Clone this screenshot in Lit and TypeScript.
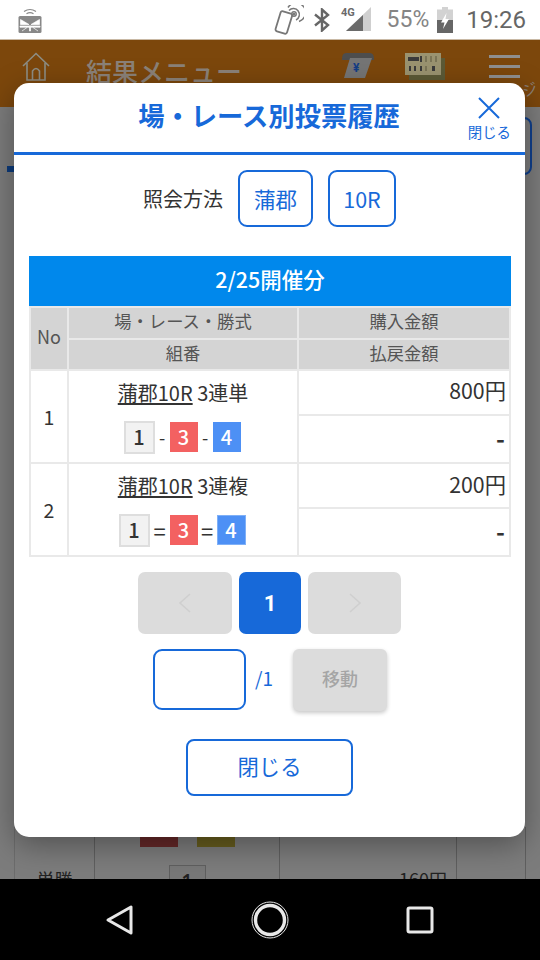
import { LitElement, html, css } from "lit";
import { customElement } from "lit/decorators.js";

@customElement("app-root")
export class AppRoot extends LitElement {
  static styles = css`
    :host { display: block; width: 540px; height: 960px; overflow: hidden; font-family: "Noto Sans CJK JP", "Noto Sans", sans-serif; --blue: #1769d9; }
    * { box-sizing: border-box; }
    .screen { position: relative; width: 540px; height: 960px; display: flex; flex-direction: column; background: #7c7c7c; overflow: hidden; }
    svg { display: block; flex: none; }

    .status { position: relative; z-index: 3; height: 40px; flex: none; background: #fff; display: flex; align-items: center; padding: 0 14px 0 18px; border-bottom: 1px solid #c9b9a5; }
    .status .sp { flex: 1; }
    .pct { font: 400 23px Roboto, sans-serif; color: #858585; margin-left: 15px; }
    .clock { font: 400 24px Roboto, sans-serif; color: #666; margin-left: 13px; }
    .status .i2 { margin-left: 10px; }
    .status .i3 { margin-left: 10px; }
    .status .i4 { margin-left: 8px; }

    .appbar { height: 67px; flex: none; background: #7c470c; display: flex; align-items: flex-start; padding: 12px 0 0 21px; }
    .apptitle { font-size: 26px; line-height: 36px; font-weight: 500; color: #8b8279; margin-left: 35px; width: 255px; white-space: nowrap; padding-top: 1px; }
    .yen { margin-right: 30px; }
    .board { margin-right: 44px; margin-top: 1px; }
    .burger { display: flex; flex-direction: column; gap: 7px; width: 31px; padding-top: 3px; }
    .burger i { display: block; height: 3px; background: #8f8f8f; }
    .ji { position: absolute; left: 522px; top: 78px; font-size: 15px; color: #8b8279; transform: rotate(-20deg); z-index: 1; }

    .page { flex: 1; display: flex; flex-direction: column; padding-top: 10px; }
    .blueout { align-self: flex-end; width: 30px; height: 58px; margin-right: 8px; border: 2px solid #0f3f8c; border-radius: 8px; }
    .bluebar { width: 7px; height: 6px; background: #0c3a7a; margin: -9px 0 0 7px; }
    .bgtable { margin-top: auto; display: grid; grid-template-columns: 15px 80px 185px 177px 69px 14px; height: 52px; }
    .bgc { border-right: 1px solid #5f5f5f; display: flex; flex-direction: column; align-items: center; overflow: hidden; }
    .bgc.plain { border-right: 1px solid #6c6c6c; }
    .swatches { display: flex; gap: 19px; width: 100%; padding-left: 45px; height: 20px; flex: none; }
    .swatches b { display: block; width: 38px; height: 20px; }
    .sw1 { background: #652828; }
    .sw2 { background: #675d1e; }
    .bgnum { width: 37px; height: 30px; flex: none; margin-top: 18px; border: 1px solid #5f5f5f; background: #787878; text-align: center; font: 600 19px/30px "Noto Sans", sans-serif; color: #222; }
    .bgname { font-size: 18px; line-height: 18px; margin-top: 43px; color: #222; }
    .bgamt { font-size: 18px; line-height: 18px; margin-top: 43px; color: #222; align-self: flex-end; padding-right: 9px; }

    .nav { position: relative; z-index: 3; height: 81px; flex: none; background: #000; display: flex; align-items: center; padding-left: 105px; }
    .nav .n2 { margin-left: 116px; }
    .nav .n3 { margin-left: 117px; }

    .modal { position: absolute; z-index: 2; left: 14px; top: 83px; width: 511px; height: 754px; background: #fff; border-radius: 15px; box-shadow: 0 8px 30px rgba(0,0,0,.35); display: flex; flex-direction: column; }
    .head { height: 72px; flex: none; border-bottom: 3px solid var(--blue); display: flex; align-items: flex-start; justify-content: center; position: relative; }
    .title { font-size: 26.3px; line-height: 34px; font-weight: 700; color: var(--blue); margin: 15px 0 0 -1px; white-space: nowrap; }
    .close { position: absolute; right: 14px; top: 14px; display: flex; flex-direction: column; align-items: center; color: var(--blue); font-size: 14.4px; line-height: 18px; }
    .close span { margin-top: 4px; }

    .method { display: flex; align-items: center; height: 57px; margin-top: 15px; padding-left: 129px; }
    .method .lbl { font-size: 20px; color: #333; margin-right: 15px; width: 80px; white-space: nowrap; }
    .chip { height: 57px; border: 2px solid var(--blue); border-radius: 9px; display: flex; align-items: center; justify-content: center; color: var(--blue); font-size: 21.5px; background: #fff; }
    .c1 { width: 75px; margin-right: 15px; }
    .c2 { width: 68px; }

    .wrap { margin: 29px 14px 0 15px; }
    .cap { height: 50px; background: #0088ec; color: #fff; font-size: 21.5px; font-weight: 500; line-height: 46px; text-align: center; }
    table { width: 482px; border-collapse: collapse; table-layout: fixed; }
    td, th { border: 2px solid #e9e9e9; padding: 0; font-weight: 400; overflow: hidden; }
    th { background: #d4d4d4; color: #555; font-size: 17.3px; height: 31.5px; line-height: 24px; padding-bottom: 3px; }
    th.no { font-size: 18px; padding-bottom: 6px; }
    td.n { text-align: center; font-size: 19.5px; color: #333; }
    td.c { text-align: center; color: #333; vertical-align: top; }
    td.a { text-align: right; padding-right: 3px; font-size: 21.3px; line-height: 28px; height: 45px; color: #333; vertical-align: top; padding-top: 5px; }
    td.a.low { padding-top: 6px; }
    td.d { height: 48px; padding-top: 8px; font-weight: 700; font-size: 24px; padding-right: 4px; }
    .race { font-size: 20px; line-height: 28px; margin-top: 8px; white-space: nowrap; }
    .race u { text-underline-offset: 2px; }
    .combo { display: flex; align-items: center; justify-content: center; margin-top: 13px; height: 34px; font-size: 18px; color: #333; padding-right: 2px; }
    .combo .s { width: 15px; text-align: center; }
    .combo.eq { font-size: 22px; }
    .combo.eq .s1 { width: 20px; }
    .combo.eq .s2 { width: 19px; }
    .bx { height: 30px; display: flex; align-items: center; justify-content: center; font-size: 20px; font-weight: 500; line-height: 1; }
    .w { width: 31px; height: 33px; background: #f2f2f2; border: 2px solid #dedede; color: #333; }
    .r { width: 28px; background: #f36161; color: #fff; }
    .b { width: 28px; background: #4d90f5; color: #fff; }
    .b.wide { width: 29px; border: 1px solid #7fb0f7; }

    .pager { display: flex; justify-content: center; gap: 7px; margin-top: 15px; }
    .pg { height: 62px; border-radius: 7px; background: #dcdcdc; display: flex; align-items: center; justify-content: center; }
    .pg.side { width: 94px; }
    .pg.last { width: 93px; }
    .pg.cur { width: 62px; background: var(--blue); color: #fff; font: 700 22px Roboto, sans-serif; }
    .jump { display: flex; align-items: flex-start; margin-top: 15px; padding-left: 139px; }
    .inp { width: 93px; height: 61px; border: 2px solid var(--blue); border-radius: 9px; background: #fff; }
    .tot { width: 47px; padding-left: 9px; line-height: 58px; font-size: 19px; color: var(--blue); }
    .go { width: 94px; height: 62px; border-radius: 6px; background: #dcdcdc; color: #a5a5a5; font-size: 18px; font-weight: 500; line-height: 58px; text-align: center; box-shadow: 0 2px 4px rgba(0,0,0,.22); }
    .closebtn { align-self: center; margin-top: 28px; width: 167px; height: 57px; border: 2px solid var(--blue); border-radius: 8px; color: var(--blue); font-size: 21.3px; line-height: 50px; text-align: center; background: #fff; }
  `;

  private row(n: string, kind: string, sep: string, amt: string, wide: boolean) {
    return html`
      <tr>
        <td class="n" rowspan="2">${n}</td>
        <td class="c" rowspan="2">
          <div class="race"><u>蒲郡10R</u> 3${kind}</div>
          <div class="combo ${wide ? "eq" : ""}">
            <div class="bx w">1</div><div class="s s1">${sep}</div>
            <div class="bx r">3</div><div class="s s2">${sep}</div>
            <div class="bx b ${wide ? "wide" : ""}">4</div>
          </div>
        </td>
        <td class="a ${wide ? "low" : ""}">${amt}</td>
      </tr>
      <tr><td class="a d">-</td></tr>`;
  }

  render() {
    return html`
      <div class="screen">
        <div class="status">
          <svg width="24" height="26" viewBox="0 0 24 26">
            <g fill="none" stroke="#8a8a8a" stroke-width="1.2">
              <path d="M6 4.5 Q12 0.5 18 4.5"/><path d="M8.5 6.8 Q12 4.5 15.5 6.8"/>
            </g>
            <rect x="0.5" y="9" width="23" height="17" rx="1.5" fill="#888"/>
            <path d="M2.5 12.5 L11 17.5 L2.5 17.5Z M21.5 12.5 L13 17.5 L21.5 17.5Z M2 19h20v1.2H2z M11.5 19v5h1v-5z M4 24 L9 20.5 M20 24 L15 20.5" fill="#fff" stroke="#fff" stroke-width=".7"/>
          </svg>
          <div class="sp"></div>
          <svg class="i1" width="30" height="30" viewBox="0 0 30 30">
            <rect x="4" y="7" width="12" height="21" rx="2" transform="rotate(17 10 17)" fill="none" stroke="#777" stroke-width="1.8"/>
            <g fill="none" stroke="#777" stroke-width="1.5">
              <circle cx="20" cy="9" r="2.2"/><path d="M15 5.5 A6 6 0 1 1 22 15"/><path d="M14 2.5 A9.5 9.5 0 1 1 25 16.5"/>
            </g>
            <circle cx="20" cy="9" r="1.2" fill="#777"/>
          </svg>
          <svg class="i2" width="16" height="24" viewBox="0 0 16 24"><path d="M1 6.5 L14 17 L8 22.5 V1.5 L14 7 L1 17.5" fill="none" stroke="#666" stroke-width="2.4"/></svg>
          <svg class="i3" width="32" height="27" viewBox="0 0 32 27">
            <path d="M6 25 H31 V1z" fill="#cfcfcf"/><path d="M6 25 H23 V9z" fill="#6a6a6a"/>
            <text x="1" y="10" font-family="Roboto, sans-serif" font-size="11" font-weight="700" fill="#6a6a6a">4G</text>
          </svg>
          <span class="pct">55%</span>
          <svg class="i4" width="16" height="26" viewBox="0 0 16 26">
            <path d="M5 0h6v2.5h5V26H0V2.5h5z" fill="#d2d2d2"/><path d="M0 13h16v13H0z" fill="#666"/>
            <path d="M9.5 6 L4 15.5 H7.5 L6 22 L12 12 H8.5z" fill="#fff"/>
          </svg>
          <span class="clock">19:26</span>
        </div>

        <div class="appbar">
          <svg width="30" height="30" viewBox="0 0 30 30" fill="none" stroke="#8d8d84" stroke-width="1.6">
            <path d="M2 14 L15 1.5 L28 14"/><path d="M6 11 V28 H24 V11"/><path d="M11.5 28 V19 Q15 14 18.5 19 V28"/>
          </svg>
          <div class="apptitle">結果メニュー</div>
          <svg class="yen" width="34" height="30" viewBox="0 0 34 30">
            <path d="M1 7 Q1 1 5 1 H29 Q33 1 33 7 V8 H1z" fill="#4d4d4d"/>
            <path d="M9 6 H31 L24 26 H3z" fill="#757575"/>
            <text x="12" y="20" font-family="Roboto, sans-serif" font-size="12" font-weight="700" fill="#143d86">¥</text>
          </svg>
          <svg class="board" width="40" height="27" viewBox="0 0 40 27">
            <rect x="4" y="5" width="36" height="22" fill="#5c5a36"/>
            <rect x="0" y="0" width="36" height="22" fill="#9a9370"/>
            <rect x="3" y="4" width="11" height="4" fill="#3a3a3a"/>
            <g fill="#3a3a3a"><rect x="15" y="3" width="2" height="6"/><rect x="4" y="13" width="2" height="5"/><rect x="9" y="13" width="2" height="5"/><rect x="15" y="13" width="2" height="5"/><rect x="27" y="13" width="3" height="5"/></g>
            <g fill="#7b7557"><rect x="20" y="3" width="2" height="6"/><rect x="25" y="3" width="2" height="6"/><rect x="30" y="3" width="2" height="6"/><rect x="20" y="13" width="2" height="5"/></g>
          </svg>
          <div class="burger"><i></i><i></i><i></i></div>
        </div>
        <span class="ji">ジ</span>

        <div class="page">
          <div class="blueout"></div>
          <div class="bluebar"></div>
          <div class="bgtable">
            <div class="bgc plain"></div>
            <div class="bgc"><div class="bgname">単勝</div></div>
            <div class="bgc"><div class="swatches"><b class="sw1"></b><b class="sw2"></b></div><div class="bgnum">1</div></div>
            <div class="bgc"><div class="bgamt">160円</div></div>
            <div class="bgc"></div>
            <div></div>
          </div>
        </div>

        <div class="nav">
          <svg width="30" height="32" viewBox="0 0 30 32"><path d="M3 16 L26 3 V29z" fill="none" stroke="#e8e8e8" stroke-width="3" stroke-linejoin="round"/></svg>
          <svg class="n2" width="38" height="38" viewBox="0 0 38 38"><circle cx="19" cy="19" r="18" fill="none" stroke="#e8e8e8" stroke-width="1"/><circle cx="19" cy="19" r="14.5" fill="none" stroke="#e8e8e8" stroke-width="3.4"/></svg>
          <svg class="n3" width="28" height="28" viewBox="0 0 28 28"><rect x="2" y="2" width="24" height="24" rx="1.5" fill="none" stroke="#e8e8e8" stroke-width="3"/></svg>
        </div>

        <div class="modal">
          <div class="head">
            <div class="title">場・レース別投票履歴</div>
            <div class="close">
              <svg width="22" height="22" viewBox="0 0 22 22"><path d="M1 1 L21 21 M21 1 L1 21" stroke="#1769d9" stroke-width="2" fill="none"/></svg>
              <span>閉じる</span>
            </div>
          </div>
          <div class="method">
            <span class="lbl">照会方法</span>
            <div class="chip c1">蒲郡</div>
            <div class="chip c2">10R</div>
          </div>
          <div class="wrap">
            <div class="cap">2/25開催分</div>
            <table>
              <colgroup><col style="width:38px"/><col style="width:230px"/><col/></colgroup>
              <tr><th class="no" rowspan="2">No</th><th>場・レース・勝式</th><th>購入金額</th></tr>
              <tr><th>組番</th><th>払戻金額</th></tr>
              ${this.row("1", "連単", "-", "800円", false)}
              ${this.row("2", "連複", "=", "200円", true)}
            </table>
          </div>
          <div class="pager">
            <div class="pg side"><svg width="16" height="22" viewBox="0 0 16 22"><path d="M13 2 L3 11 L13 20" fill="none" stroke="#cfcfcf" stroke-width="1.6"/></svg></div>
            <div class="pg cur">1</div>
            <div class="pg side last"><svg width="16" height="22" viewBox="0 0 16 22"><path d="M3 2 L13 11 L3 20" fill="none" stroke="#cfcfcf" stroke-width="1.6"/></svg></div>
          </div>
          <div class="jump">
            <div class="inp"></div>
            <div class="tot">/1</div>
            <div class="go">移動</div>
          </div>
          <div class="closebtn">閉じる</div>
        </div>
      </div>`;
  }
}
